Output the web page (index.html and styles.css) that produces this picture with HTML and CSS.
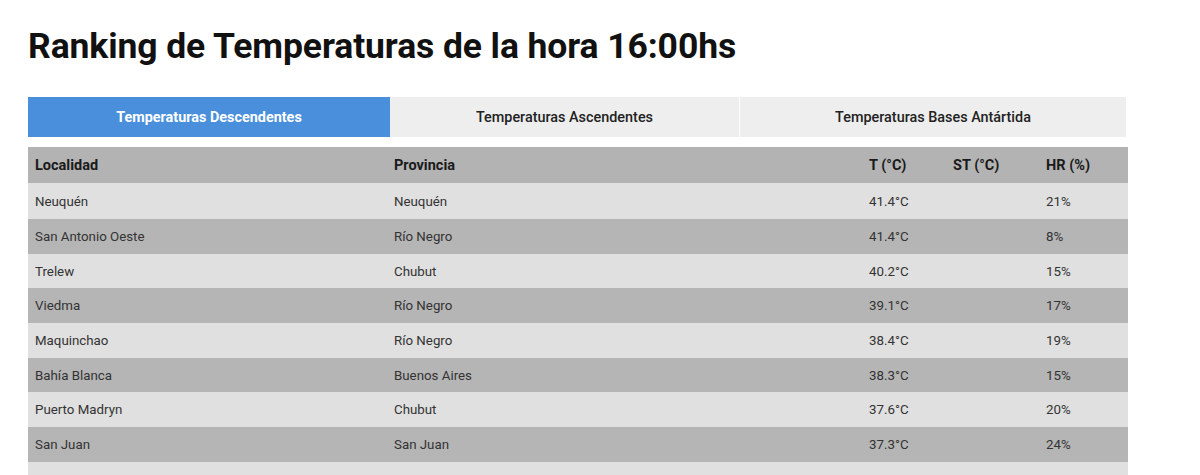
FILE: index.html
```html
<!DOCTYPE html>
<html lang="es">
<head>
<meta charset="utf-8">
<link rel="stylesheet" href="styles.css">
</head>
<body>
<main class="page">
  <h1 class="title">Ranking de Temperaturas de la hora 16:00hs</h1>
  <div class="tabs">
    <div class="tab tab-active">Temperaturas Descendentes</div>
    <div class="tab tab-mid">Temperaturas Ascendentes</div>
    <div class="tab tab-last">Temperaturas Bases Antártida</div>
  </div>
  <table class="ranking">
    <colgroup>
      <col class="c-loc"><col class="c-prov"><col class="c-t"><col class="c-st"><col class="c-hr">
    </colgroup>
    <thead>
      <tr><th>Localidad</th><th>Provincia</th><th>T (°C)</th><th>ST (°C)</th><th>HR (%)</th></tr>
    </thead>
    <tbody>
      <tr class="first"><td>Neuquén</td><td>Neuquén</td><td>41.4°C</td><td></td><td>21%</td></tr>
      <tr><td>San Antonio Oeste</td><td>Río Negro</td><td>41.4°C</td><td></td><td>8%</td></tr>
      <tr><td>Trelew</td><td>Chubut</td><td>40.2°C</td><td></td><td>15%</td></tr>
      <tr><td>Viedma</td><td>Río Negro</td><td>39.1°C</td><td></td><td>17%</td></tr>
      <tr><td>Maquinchao</td><td>Río Negro</td><td>38.4°C</td><td></td><td>19%</td></tr>
      <tr><td>Bahía Blanca</td><td>Buenos Aires</td><td>38.3°C</td><td></td><td>15%</td></tr>
      <tr><td>Puerto Madryn</td><td>Chubut</td><td>37.6°C</td><td></td><td>20%</td></tr>
      <tr><td>San Juan</td><td>San Juan</td><td>37.3°C</td><td></td><td>24%</td></tr>
      <tr><td>La Rioja</td><td>La Rioja</td><td>37.2°C</td><td>40.0°C</td><td>16%</td></tr>
    </tbody>
  </table>
</main>
</body>
</html>
```
FILE: styles.css
```css
* { box-sizing: border-box; }
html, body { margin: 0; padding: 0; background: #fff; }
body {
  font-family: Roboto, "Liberation Sans", Arial, sans-serif;
  color: #222;
  overflow: hidden;
}
.page {
  padding: 0 0 0 28px;
  width: 1128px;
}
.title {
  margin: 0;
  padding-top: 23px;
  height: 97px;
  font-size: 35.5px;
  font-weight: 700;
  line-height: 46px;
  color: #111;
  letter-spacing: -0.1px;
}
.tabs {
  display: flex;
  height: 40px;
  margin-right: 2px;
}
.tab {
  display: flex;
  align-items: center;
  justify-content: center;
  font-size: 14.4px;
  font-weight: 500;
  color: #222;
  background: #eeeeee;
}
.tab-active {
  width: 362px;
  background: #4a8fdb;
  color: #fff;
  font-weight: 700;
}
.tab-mid {
  width: 350px;
  border-right: 1px solid #fff;
}
.tab-last {
  flex: 1;
}
.ranking {
  margin-top: 10px;
  width: 1100px;
  border-collapse: collapse;
  table-layout: fixed;
  font-size: 13.3px;
}
.c-loc { width: 359px; }
.c-prov { width: 475px; }
.c-t { width: 84px; }
.c-st { width: 93px; }
.c-hr { width: 89px; }
.ranking th {
  text-align: left;
  font-weight: 700;
  font-size: 14.5px;
  height: 36px;
  padding: 0 0 0 7px;
  background: #b3b3b3;
  color: #1a1a1a;
}
.ranking td {
  height: 34.7px;
  padding: 0 0 0 7px;
  color: #333;
}
.ranking tr.first td { height: 36px; }
.ranking tbody tr:nth-child(odd) td { background: #e0e0e0; }
.ranking tbody tr:nth-child(even) td { background: #b5b5b5; }
```
